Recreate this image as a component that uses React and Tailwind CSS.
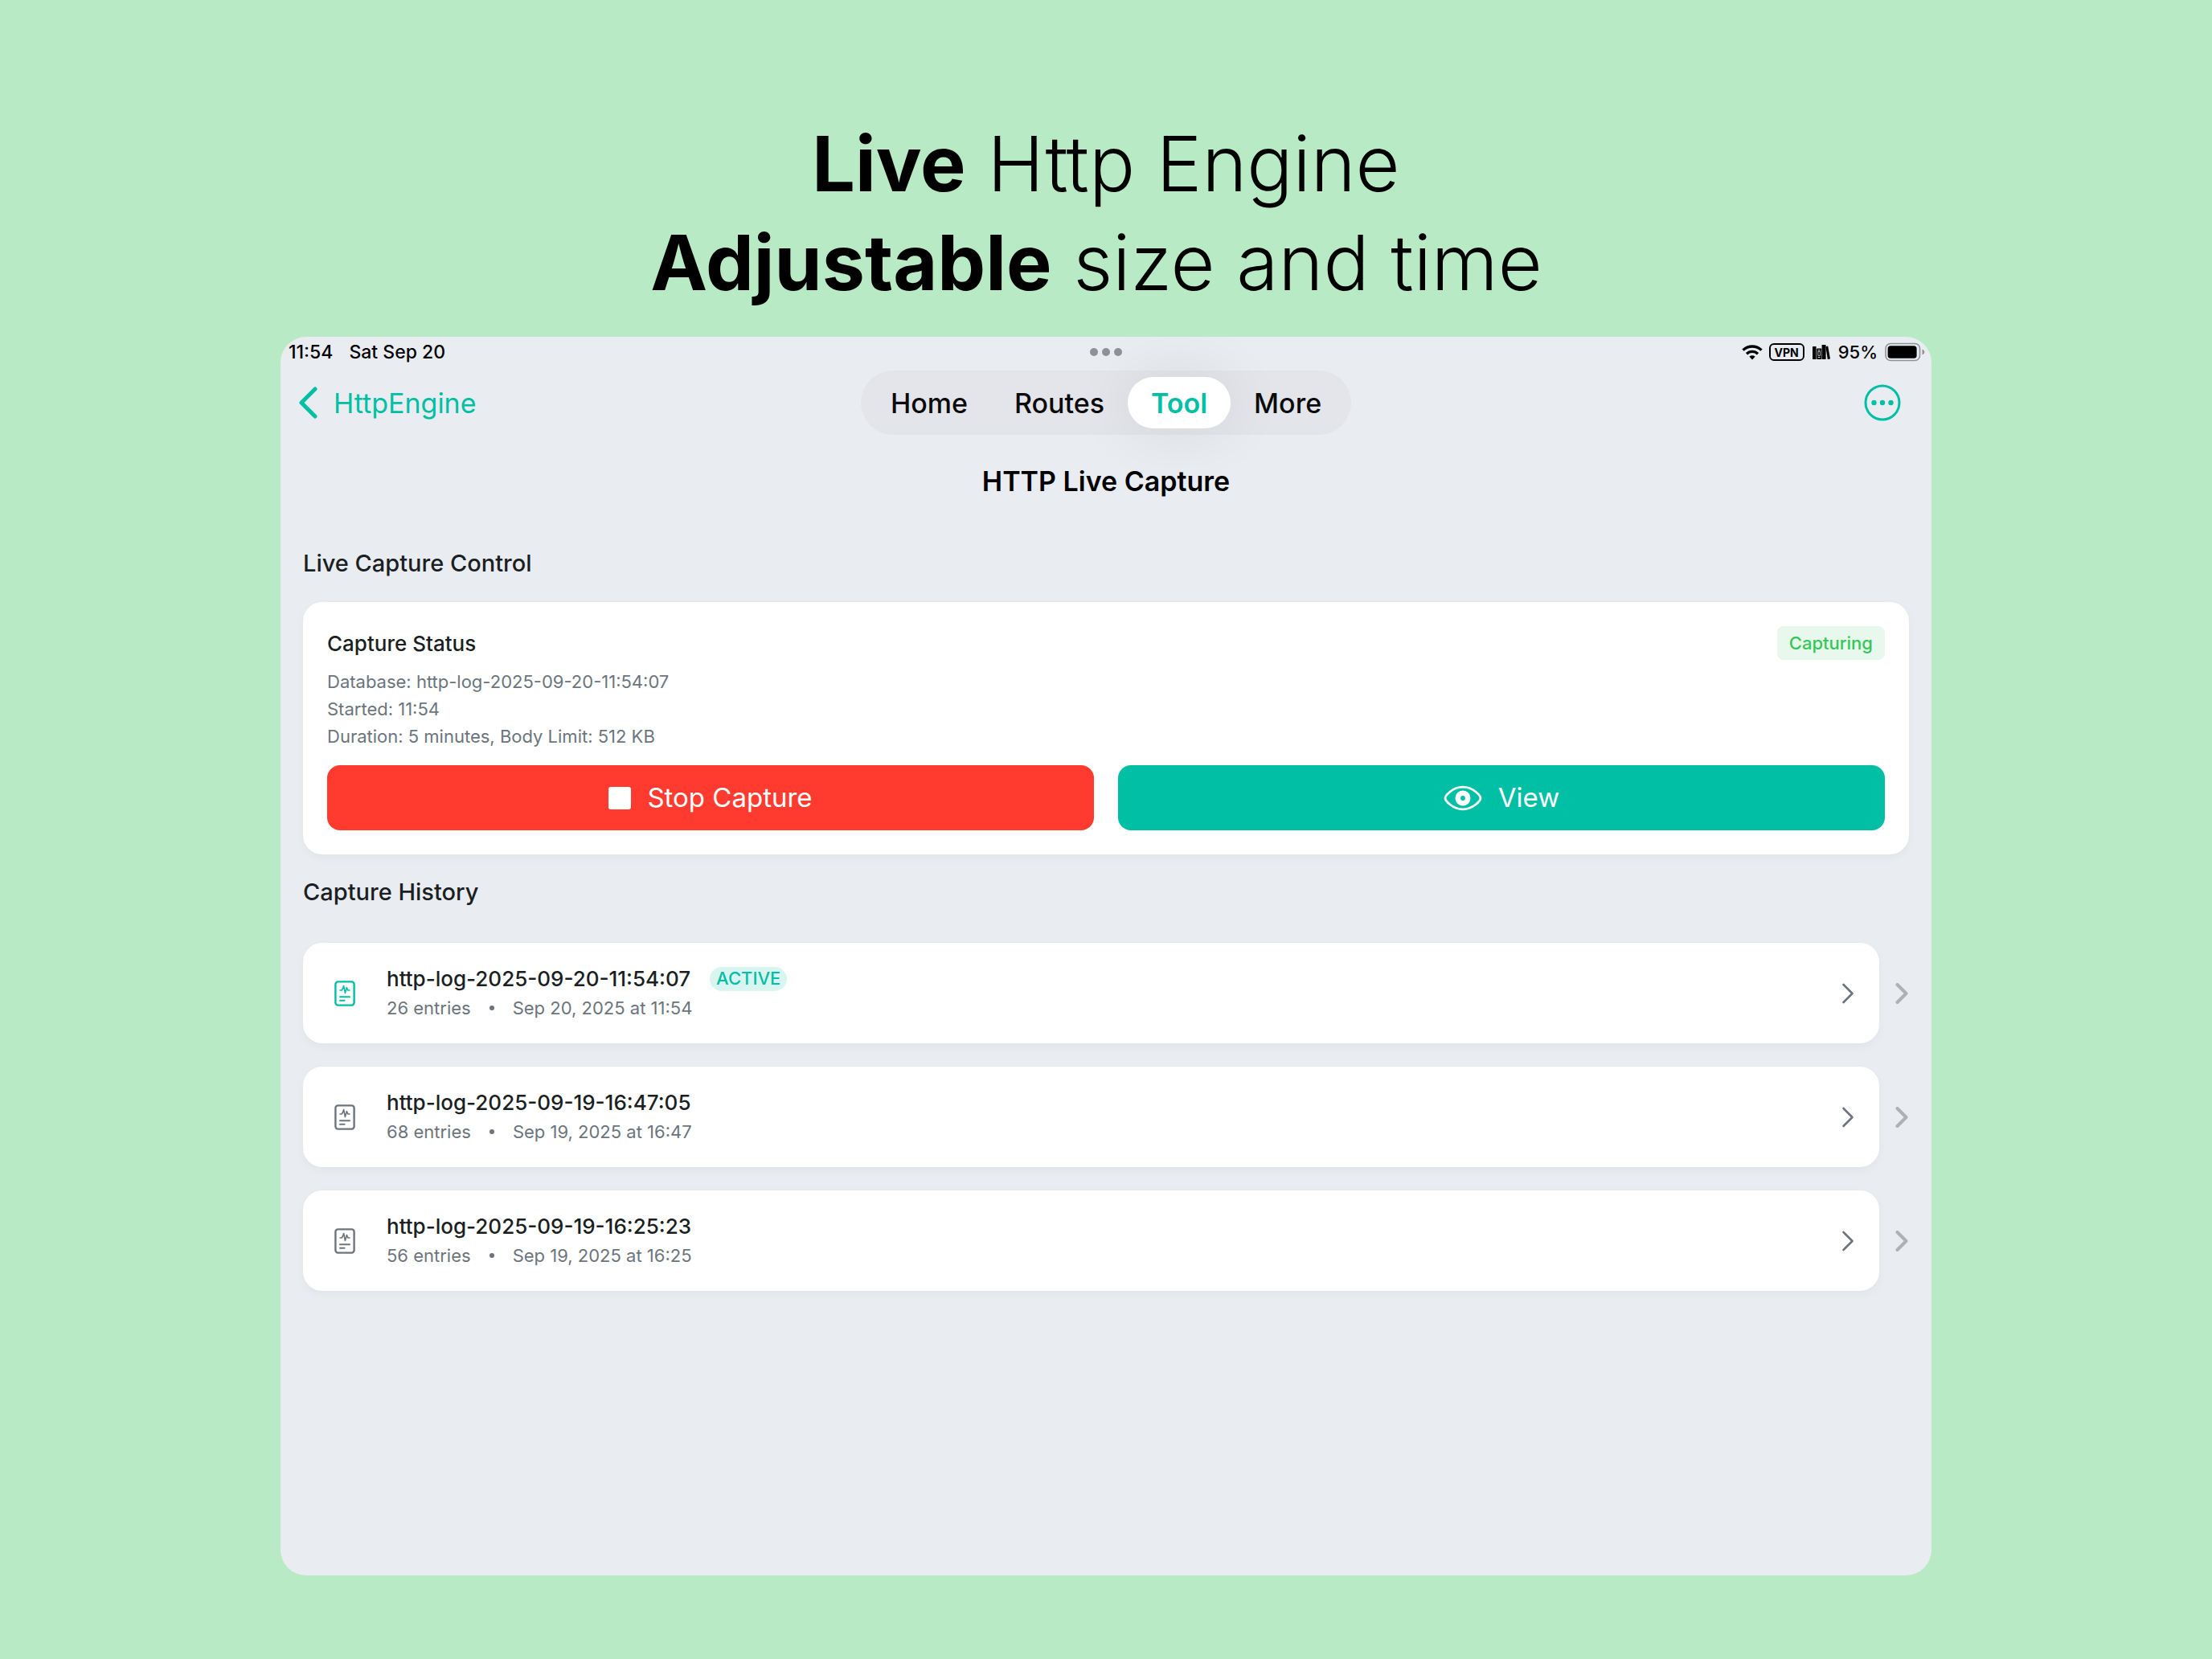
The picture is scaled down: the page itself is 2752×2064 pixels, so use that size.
import { useState } from 'react';

const TABS = ['Home', 'Routes', 'Tool', 'More'];

const HISTORY = [
  { name: 'http-log-2025-09-20-11:54:07', entries: 26, date: 'Sep 20, 2025 at 11:54', active: true },
  { name: 'http-log-2025-09-19-16:47:05', entries: 68, date: 'Sep 19, 2025 at 16:47', active: false },
  { name: 'http-log-2025-09-19-16:25:23', entries: 56, date: 'Sep 19, 2025 at 16:25', active: false },
];

function Chevron({ className, width }) {
  return (
    <svg className={className} viewBox="0 0 16 26" fill="none" stroke="currentColor" strokeWidth={width} strokeLinecap="round" strokeLinejoin="round" aria-hidden="true">
      <path d="M2.5 2 L13.5 13 L2.5 24" />
    </svg>
  );
}

function LogIcon({ className }) {
  return (
    <svg className={className} viewBox="0 0 26 32" fill="none" stroke="currentColor" strokeWidth="2.4" strokeLinecap="round" strokeLinejoin="round" aria-hidden="true">
      <rect x="1.4" y="1.4" width="23.2" height="29.2" rx="3" />
      <path strokeWidth="1.6" d="M7 12 H9.2 L10.4 10 L11.6 6.5 L13.4 15.5 L15.4 8.5 L16.8 12 H19" />
      <path strokeWidth="1.9" d="M7 20.2 H19 M7 24.8 H12.6" />
    </svg>
  );
}

function StatusIcons() {
  return (
    <div className="flex items-center">
      <svg className="h-5 w-[26px]" viewBox="0 0 26 20" fill="none" stroke="black" strokeWidth="3.4" aria-hidden="true">
        <path d="M1.5 7.6 A16.5 16.5 0 0 1 24.5 7.6" />
        <path d="M6 12.2 A10 10 0 0 1 20 12.2" />
        <path d="M13 19.4 L9.4 15.8 A5.2 5.2 0 0 1 16.6 15.8 Z" fill="black" stroke="none" />
      </svg>
      <span className="ml-2 flex h-[22px] w-11 items-center justify-center rounded-[6px] border-2 border-black text-[14px] font-bold">VPN</span>
      <svg className="ml-[10px] h-5 w-[22px]" viewBox="0 0 22 20" aria-hidden="true">
        <rect x="0" y="3" width="4.6" height="16" rx="0.6" />
        <rect x="5.2" y="5.4" width="6" height="13.6" rx="0.8" />
        <rect x="11.6" y="1" width="5" height="18" rx="0.6" />
        <path d="M16.4 3.2 L19.2 2.6 L22 18.4 L18.8 19 Z" />
        <path d="M6.8 7.8 H9.6 M6.8 16.6 H9.6" stroke="#e9edf2" strokeWidth="1" />
        <rect x="7" y="9.6" width="2.4" height="5" fill="none" stroke="#e9edf2" strokeWidth="0.7" />
      </svg>
      <span className="ml-[10px]">95%</span>
      <svg className="ml-[9px] h-6 w-[50px]" viewBox="0 0 50 24" aria-hidden="true">
        <rect x="1" y="1.5" width="42.5" height="21" rx="6" fill="none" stroke="#8f9296" strokeWidth="1.6" />
        <rect x="3.6" y="4.2" width="36" height="15.6" rx="3.6" />
        <path d="M46.5 8.5 Q49.4 9.8 49.4 12 Q49.4 14.2 46.5 15.5 Z" fill="#8f9296" />
      </svg>
    </div>
  );
}

function StatusBar() {
  return (
    <div className="grid h-[42px] grid-cols-3 items-center px-2 pb-1 text-[22px] font-medium text-black">
      <div className="flex gap-5 pl-[2px] text-[23px]">
        <span>11:54</span>
        <span>Sat Sep 20</span>
      </div>
      <div className="flex justify-center gap-[5px]">
        <i className="size-[10px] rounded-full bg-[#8e9196]" />
        <i className="size-[10px] rounded-full bg-[#8e9196]" />
        <i className="size-[10px] rounded-full bg-[#8e9196]" />
      </div>
      <div className="flex justify-end">
        <StatusIcons />
      </div>
    </div>
  );
}

function NavBar() {
  const [tab, setTab] = useState('Tool');
  return (
    <div className="grid grid-cols-[1fr_auto_1fr] items-center px-[22px] text-[34px]">
      <a href="#back" className="flex items-center gap-5 text-[#00bfa5]">
        <svg className="h-10 w-6" viewBox="0 0 24 40" fill="none" stroke="currentColor" strokeWidth="5" strokeLinecap="round" strokeLinejoin="round" aria-hidden="true">
          <path d="M21 3 L4 20 L21 37" />
        </svg>
        HttpEngine
      </a>
      <nav className="flex h-20 items-center rounded-full bg-[#e4e5ea] px-2">
        {TABS.map(t => (
          <button
            key={t}
            type="button"
            onClick={() => setTab(t)}
            className={`h-16 rounded-full px-[29px] ${t === tab ? 'bg-white font-semibold text-[#00bfa5] shadow-[0_0_80px_rgba(0,0,0,0.09)]' : 'font-medium text-[#0b0b0c]'}`}
          >
            {t}
          </button>
        ))}
      </nav>
      <button type="button" aria-label="More options" className="mr-4 justify-self-end text-[#00bfa5]">
        <svg className="size-[46px]" viewBox="0 0 46 46" fill="none" stroke="currentColor" strokeWidth="3" aria-hidden="true">
          <circle cx="23" cy="23" r="21" />
          <g fill="currentColor" stroke="none">
            <circle cx="12.5" cy="23" r="3.2" />
            <circle cx="23" cy="23" r="3.2" />
            <circle cx="33.5" cy="23" r="3.2" />
          </g>
        </svg>
      </button>
    </div>
  );
}

function CaptureControl() {
  return (
    <section className="rounded-3xl bg-white p-[30px] shadow-[0_4px_12px_rgba(0,0,0,0.04)]">
      <div className="flex items-center justify-between">
        <h3 className="text-[26px] font-medium text-[#1b1f23]">Capture Status</h3>
        <span className="flex h-[42px] items-center rounded-lg bg-[#e8f8ec] px-[15px] text-[22px] font-medium text-[#34c759]">Capturing</span>
      </div>
      <div className="mt-[10px] mb-[19px] text-[22px] leading-[34px] text-[#6c757d]">
        <p>Database: http-log-2025-09-20-11:54:07</p>
        <p>Started: 11:54</p>
        <p>Duration: 5 minutes, Body Limit: 512 KB</p>
      </div>
      <div className="grid grid-cols-2 gap-[30px] text-[33px] text-white">
        <button type="button" className="flex h-[81px] items-center justify-center gap-5 rounded-2xl bg-[#ff3b30]">
          <i className="size-7 rounded-[3px] bg-white" />
          Stop Capture
        </button>
        <button type="button" className="flex h-[81px] items-center justify-center gap-5 rounded-2xl bg-[#00bfa5]">
          <svg className="h-8 w-12" viewBox="0 0 48 32" fill="none" stroke="currentColor" strokeWidth="2.8" aria-hidden="true">
            <path d="M2 16 C2 13 11 2.2 24 2.2 C37 2.2 46 13 46 16 C46 19 37 29.8 24 29.8 C11 29.8 2 19 2 16 Z" />
            <circle cx="24" cy="16" r="6.2" strokeWidth="6.6" />
          </svg>
          View
        </button>
      </div>
    </section>
  );
}

function HistoryRow({ item }) {
  return (
    <li className="flex items-center gap-5">
      <a href="#log" className="flex h-[125px] flex-1 items-center rounded-3xl bg-white pl-[39px] pr-[31px] shadow-[0_4px_12px_rgba(0,0,0,0.04)]">
        <LogIcon className={`h-8 w-[26px] ${item.active ? 'text-[#00bfa5]' : 'text-[#6c757d]'}`} />
        <div className="ml-[39px] flex-1">
          <div className="flex items-center gap-6">
            <span className="text-[26px] leading-8 font-medium text-[#1b1f23]">{item.name}</span>
            {item.active && <span className="flex h-[30px] items-center rounded-full bg-[#d9f5f1] px-2 text-[22px] font-medium text-[#00bfa5]">ACTIVE</span>}
          </div>
          <div className="mt-1 flex items-center text-[22px] leading-8 text-[#6c757d]">
            <span>{item.entries} entries</span>
            <i className="mx-[23px] size-[6px] rounded-full bg-[#6c757d]" />
            <span>{item.date}</span>
          </div>
        </div>
        <Chevron className="h-[26px] w-4 text-[#6c757d]" width="2.6" />
      </a>
      <Chevron className="h-[26px] w-4 text-[#adb1b5]" width="4" />
    </li>
  );
}

export default function App() {
  return (
    <div className="flex min-h-screen flex-col bg-[#b7eac5] px-[349px] pt-[142px] pb-[104px] font-['Inter',sans-serif]">
      <h1 className="text-center text-[95px] leading-[123px] font-light text-black">
        <span className="block"><b className="font-bold">Live</b> Http Engine</span>
        <span className="block pr-6"><b className="font-bold">Adjustable</b> size and time</span>
      </h1>

      <main className="mt-[31px] flex-1 overflow-hidden rounded-[32px] bg-[#e9edf2]">
        <StatusBar />
        <NavBar />
        <h2 className="mt-[33px] text-center text-[34px] leading-[50px] font-semibold text-black">HTTP Live Capture</h2>

        <div className="px-7">
          <h2 className="mt-[57px] mb-7 text-[29px] leading-10 font-medium text-[#1b1f23]">Live Capture Control</h2>
          <CaptureControl />

          <h2 className="mt-[27px] mb-[43px] text-[29px] leading-10 font-medium text-[#1b1f23]">Capture History</h2>
          <ul className="flex flex-col gap-[29px] pr-px">
            {HISTORY.map(item => <HistoryRow key={item.name} item={item} />)}
          </ul>
        </div>
      </main>
    </div>
  );
}
